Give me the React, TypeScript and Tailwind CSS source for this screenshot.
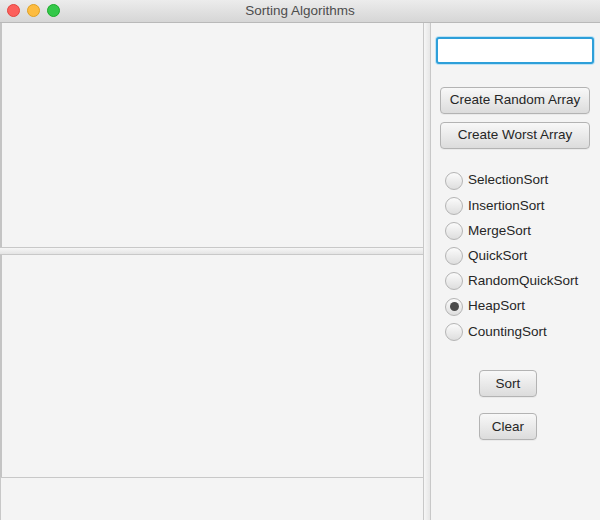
import { useState } from 'react';

const algorithms = [
    'SelectionSort',
    'InsertionSort',
    'MergeSort',
    'QuickSort',
    'RandomQuickSort',
    'HeapSort',
    'CountingSort',
];

const FxButton = ({ label, className }: { label: string; className: string }) => (
    <button
        className={`h-[27px] rounded-[4px] border border-[#b3b3b3] bg-gradient-to-b from-[#f8f8f8] to-[#dcdcdc] text-[13.5px] text-[#262626] shadow-[0_1px_0_rgba(0,0,0,0.04)] ${className}`}
    >
        {label}
    </button>
);

const Radio = ({ checked }: { checked: boolean }) => (
    <span className="flex h-[18px] w-[18px] items-center justify-center rounded-full border border-[#b4b4b4] bg-gradient-to-b from-[#fbfbfb] to-[#dedede]">
        {checked && <span className="h-[9px] w-[9px] rounded-full bg-[#4a4a4a]" />}
    </span>
);

export default function App() {
    const [selected, setSelected] = useState('HeapSort');

    return (
        <div
            className="flex h-[520px] w-[600px] flex-col overflow-hidden bg-[#f4f4f4] text-[#262626]"
            style={{ fontFamily: '"Liberation Sans", Arial, sans-serif' }}
        >
            {/* title bar */}
            <div className="relative flex h-[23px] shrink-0 items-center justify-center border-b border-[#b9b9b9] bg-gradient-to-b from-[#ececec] to-[#d6d6d6]">
                <div className="absolute left-[7px] top-[4px] flex gap-[7px]">
                    <span className="h-[13px] w-[13px] rounded-full border border-[#e2463f] bg-[#fc605c]" />
                    <span className="h-[13px] w-[13px] rounded-full border border-[#dfa123] bg-[#fdbc40]" />
                    <span className="h-[13px] w-[13px] rounded-full border border-[#1aab29] bg-[#34c84a]" />
                </div>
                <span className="text-[13.5px] text-[#4d4d4d]">Sorting Algorithms</span>
            </div>

            <div className="flex flex-1">
                {/* canvas column */}
                <div className="flex w-[423px] shrink-0 flex-col">
                    <div className="h-[224px] border-l-2 border-[#c4c4c4]" />
                    <div className="h-[8px] border-y border-[#c8c8c8] bg-gradient-to-b from-[#f6f6f6] to-[#e4e4e4]" />
                    <div className="h-[222px] border-l-2 border-[#c4c4c4]" />
                    <div className="flex-1 border-l border-t border-[#c8c8c8]" />
                </div>

                {/* split divider */}
                <div className="w-[8px] shrink-0 border-x border-[#c8c8c8] bg-gradient-to-r from-[#f6f6f6] to-[#e6e6e6]" />

                {/* controls */}
                <div className="flex flex-1 flex-col">
                    <input
                        className="ml-[5px] mt-[14px] h-[27px] w-[158px] rounded-[3px] border-2 border-[#2d9fd9] bg-white px-1 text-[13px] outline-none shadow-[0_0_0_1px_#bfe3f5]"
                    />
                    <FxButton label="Create Random Array" className="ml-[9px] mt-[23px] w-[150px]" />
                    <FxButton label="Create Worst Array" className="ml-[9px] mt-[8px] w-[150px]" />

                    <div className="mt-[19px] flex flex-col">
                        {algorithms.map((name) => (
                            <label
                                key={name}
                                onClick={() => setSelected(name)}
                                className="ml-[14px] flex h-[25.2px] items-center gap-[5px] text-[13.5px]"
                            >
                                <Radio checked={selected === name} />
                                <span>{name}</span>
                            </label>
                        ))}
                    </div>

                    <FxButton label="Sort" className="ml-[48px] mt-[26px] w-[58px]" />
                    <FxButton label="Clear" className="ml-[48px] mt-[16px] w-[58px]" />
                </div>
            </div>
        </div>
    );
}
